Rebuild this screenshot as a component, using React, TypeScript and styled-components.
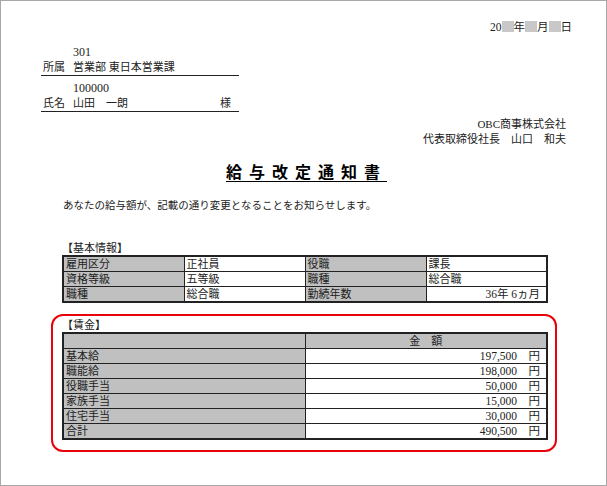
import React from "react"
import styled, { createGlobalStyle } from "styled-components"

const Global = createGlobalStyle`
  html, body { margin: 0; padding: 0; background: #fff; }
  body { font-family: "Liberation Serif", "Noto Sans CJK JP", serif; color: #222; }
`

const Page = styled.div`
  box-sizing: border-box;
  width: 607px;
  height: 486px;
  border: 1px solid #a8a8a8;
  padding: 19px 40px 0 40px;
  font-size: 11px;
  line-height: 15px;
`

const DateLine = styled.div`
  text-align: right;
  margin-right: -6px;
  font-size: 11.5px;
`

const Blank = styled.span`
  display: inline-block;
  width: 12px;
  height: 11px;
  background: #c8c8c8;
  vertical-align: -1px;
`

const Address = styled.div`
  width: 198px;
  margin-top: 10px;
`

const Code = styled.div`
  padding-left: 32px;
  font-size: 12px;
`

const AddrRow = styled.div`
  display: flex;
  border-bottom: 1px solid #222;
  padding-left: 2px;
  margin-bottom: 5px;
  span:first-child { width: 30px; }
  span:nth-child(2) { flex: 1; }
  span:nth-child(3) { padding-right: 8px; }
`

const Company = styled.div`
  text-align: right;
  margin-top: 4px;
`

const Title = styled.h1`
  margin: 18px 0 0;
  text-align: center;
  font-size: 16px;
  font-weight: bold;
  letter-spacing: 7px;
  text-decoration: underline;
  text-underline-offset: 3px;
  padding-left: 6px;
  color: #000;
`

const Lead = styled.p`
  margin: 18px 0 0;
  padding-left: 22px;
  font-size: 10.5px;
`

const Section = styled.div`
  margin-top: 28px;
  padding-left: 21px;
  width: 486px;
`

const Money = styled.div`
  margin: 11px 0 0 10px;
  width: 506px;
  box-sizing: border-box;
  border: 2px solid #e8000b;
  border-radius: 12px;
  padding: 2px 8px 10px 9px;
`

const Label = styled.div`
  line-height: 14px;
`

const Table = styled.table`
  width: 486px;
  border-collapse: collapse;
  border: 2px solid #222;
  table-layout: fixed;
  td {
    border: 1px solid #222;
    height: 14px;
    padding: 0 2px;
    line-height: 14px;
    white-space: nowrap;
  }
`

const Cell = styled.td<{ $head?: boolean; $right?: boolean; $center?: boolean }>`
  background: ${p => (p.$head ? "#c0c0c0" : "#fff")};
  text-align: ${p => (p.$right ? "right" : p.$center ? "center" : "left")};
  padding-right: ${p => (p.$right ? "6px" : "2px")} !important;
  font-size: ${p => (p.$right ? "11.5px" : "11px")};
`

const basic = [
  ["雇用区分", "正社員", "役職", "課長"],
  ["資格等級", "五等級", "職種", "総合職"],
  ["職種", "総合職", "勤続年数", "36年 6ヵ月"],
]

const pay = [
  ["基本給", "197,500"],
  ["職能給", "198,000"],
  ["役職手当", "50,000"],
  ["家族手当", "15,000"],
  ["住宅手当", "30,000"],
  ["合計", "490,500"],
]

export default function App() {
  return (
    <Page>
      <Global />
      <DateLine>20<Blank />年<Blank />月<Blank />日</DateLine>
      <Address>
        <Code>301</Code>
        <AddrRow><span>所属</span><span>営業部 東日本営業課</span></AddrRow>
        <Code>100000</Code>
        <AddrRow><span>氏名</span><span>山田　一朗</span><span>様</span></AddrRow>
      </Address>
      <Company>
        <div>OBC商事株式会社</div>
        <div>代表取締役社長　山口　和夫</div>
      </Company>
      <Title>給与改定通知書</Title>
      <Lead>あなたの給与額が、記載の通り変更となることをお知らせします。</Lead>
      <Section>
        <Label>【基本情報】</Label>
        <Table>
          <tbody>
            {basic.map((r, i) => (
              <tr key={i}>
                <Cell $head>{r[0]}</Cell>
                <Cell>{r[1]}</Cell>
                <Cell $head>{r[2]}</Cell>
                <Cell $right={i === 2}>{r[3]}</Cell>
              </tr>
            ))}
          </tbody>
        </Table>
      </Section>
      <Money>
        <Label>【賃金】</Label>
        <Table>
          <tbody>
            <tr>
              <Cell $head />
              <Cell $head $center>金　額</Cell>
            </tr>
            {pay.map(r => (
              <tr key={r[0]}>
                <Cell $head>{r[0]}</Cell>
                <Cell $right>{r[1]}　円</Cell>
              </tr>
            ))}
          </tbody>
        </Table>
      </Money>
    </Page>
  )
}
